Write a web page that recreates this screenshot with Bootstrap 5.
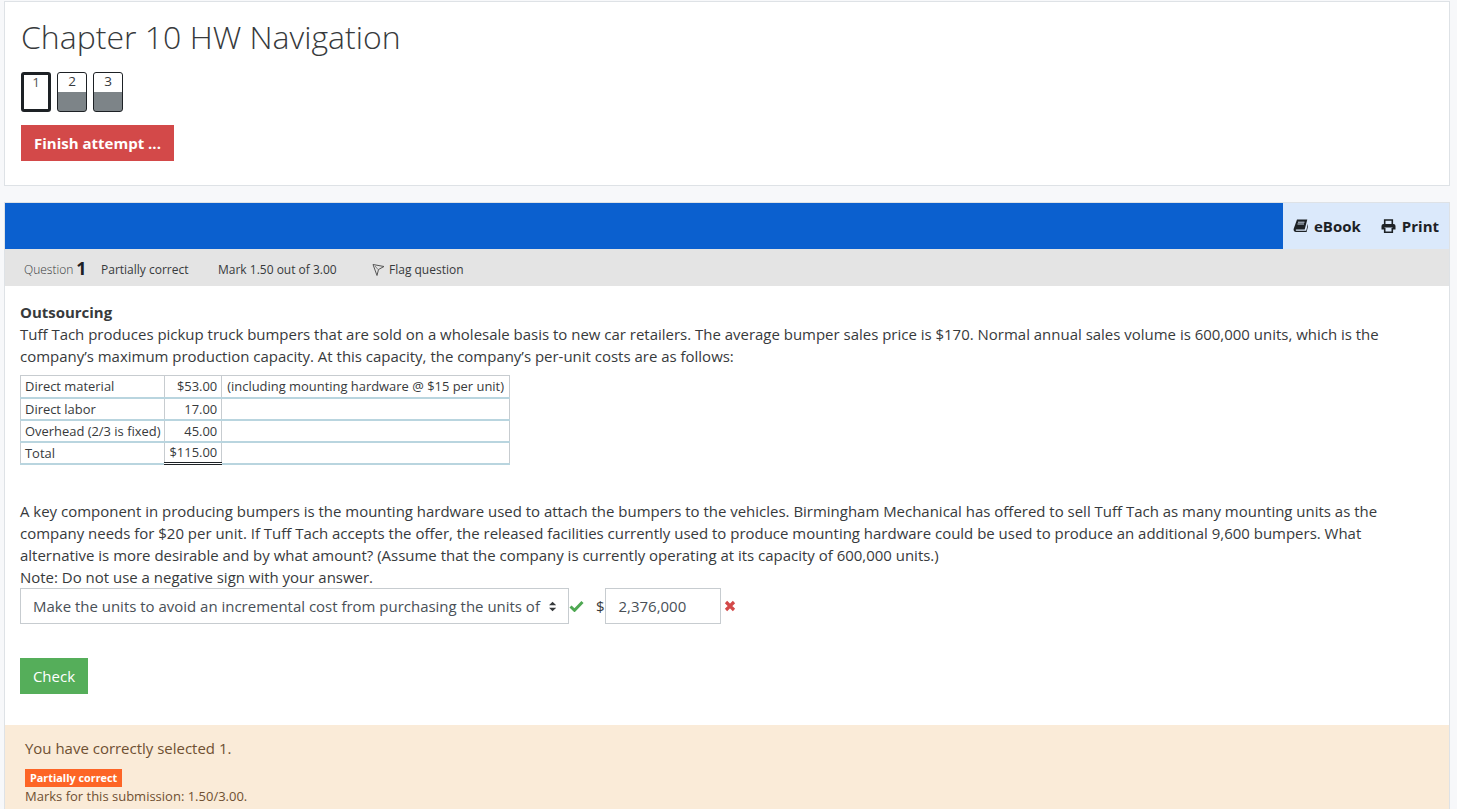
<!DOCTYPE html>
<html lang="en"><head><meta charset="utf-8"><title>Chapter 10 HW</title>
<link href="https://cdn.jsdelivr.net/npm/bootstrap@5.3.0/dist/css/bootstrap.min.css" rel="stylesheet">
<style>
html,body{height:809px;overflow:hidden}
body{background:#f7f8fa;font-family:"Open Sans",sans-serif;font-size:14.97px;line-height:22px;color:#373a3c;padding:1px 7px 0 4px}
.navpanel{background:#fff;border:1px solid #dee2e6;height:185px;padding:15px 16px 0;margin-bottom:16px}
.navtitle{font-family:"Open Sans",sans-serif;font-weight:300;font-size:32px;line-height:40px;color:#373a3c;margin:0 0 15px}
.qbtns{display:flex;gap:6px;margin-bottom:13px;height:40px}
.qbtn{width:30px;height:40px;border:1px solid #1d2125;border-radius:3px;font-size:13.5px;line-height:16px;text-align:center;background:linear-gradient(#fff 0,#fff 19px,#7d8488 19px);color:#373a3c}
.qbtn.cur{border-width:3px;background:#fff;line-height:14px;color:#555}
.finishbtn{background:#d34949;color:#fff;font-weight:700;font-size:15px;border:0;border-radius:0;height:36px;width:153px;padding:0;display:block;line-height:36px}
.qwrap{background:#fff;border:1px solid #dee2e6;border-bottom:0;height:607px;overflow:hidden}
.bluebar{background:#0b60cf;height:46px;display:flex;justify-content:flex-end}
.toolbox{background:#dbe9fb;width:166px;display:flex;align-items:center;gap:20px;padding:0 0 1px 10px;font-weight:700;color:#1d2125;font-size:15px}
.toolitem{display:flex;align-items:center;gap:6px}
.infobar{background:#e4e4e4;height:37px;display:flex;align-items:center;padding:4px 0 0 19px;font-size:12px;color:#373a3c}
.qlabel{color:#373a3c;font-weight:300;width:77px;display:flex;align-items:center;gap:3px}
.qnum{font-size:18px;font-weight:700;color:#1d2125;margin-top:-3px}
.qstate{width:117px}.qmark{width:154px}
.flagit{display:flex;align-items:center;gap:4px}
.qbody{padding:15px 15px 0}
.qtitle{font-weight:700;margin:0}
.qtext{margin:0}
.datatab{border-collapse:collapse;font-size:12.93px;line-height:18px;margin:8px 0 35px;color:#373a3c;border:1px solid #c7ccd0}
.datatab td{border:1px solid #c7ccd0;border-bottom:2px solid #b9d5df;padding:0 4px;height:22px}
.datatab .amt{text-align:right}
.datatab .notecell{padding:0 5px}
.datatab .totalamt{border-top:1px solid #1d2125;border-bottom:3px double #1d2125}
.answerline{display:flex;align-items:center;height:36px}
.fakeselect{width:549px;height:36px;border:1px solid #c7ccd0;display:flex;align-items:center;gap:9px;padding:0 12px;color:#495057;background:#fff;white-space:nowrap}
.dollar{margin-left:12px}
.amountbox{width:116px;height:36px;border:1px solid #c7ccd0;padding:0 13px;line-height:34px;color:#495057}
.checkbtn{background:#55ae5a;color:#fff;border:0;border-radius:0;width:68px;height:36px;padding:0;margin-top:34px;display:block;font-size:15px}
.feedback{background:#faebd8;color:#6f5032;margin-top:31px;padding:12px 20px 0;height:100px}
.fbtext{margin:0 0 10px}
.pbadge{display:block;width:fit-content;background:#fd6526;color:#fff;font-weight:700;font-size:10.85px;line-height:18px;padding:0 5px;height:18px}
.marksline{font-size:13px;line-height:18px}
.xmark{margin-left:3px}
</style></head><body>
<section class="navpanel">
<h2 class="navtitle">Chapter 10 HW Navigation</h2>
<div class="qbtns"><div class="qbtn cur">1</div><div class="qbtn">2</div><div class="qbtn">3</div></div>
<button class="btn finishbtn">Finish attempt ...</button>
</section>
<section class="qwrap">
<div class="bluebar"><div class="toolbox">
<span class="toolitem"><svg width="15" height="14" viewBox="0 0 15 14"><path d="M4 .5h10.300l-2.600 10H3.400c-.9 0-1.200 1-.1 1.200h9.900l1.600-6.500.7.4-1.900 7.400H3C1 13 .3 11.300.7 9.800z" fill="#1d2125"/><path d="M5 3.200h6.500M4.500 5h6.500" stroke="#dbe9fb" stroke-width=".9"/></svg>eBook</span>
<span class="toolitem"><svg width="15" height="14" viewBox="0 0 15 14"><path d="M3.700 6V1h7.600v5" fill="none" stroke="#1d2125" stroke-width="1.600"/><path d="M2.500 5h10Q14.500 5 14.500 7v3.500h-3V8.500h-8v2h-3V7Q.5 5 2.500 5z" fill="#1d2125"/><path d="M3.700 9v4.200h7.600V9" fill="none" stroke="#1d2125" stroke-width="1.600"/></svg>Print</span>
</div></div>
<div class="infobar">
<span class="qlabel">Question <span class="qnum">1</span></span>
<span class="qstate">Partially correct</span><span class="qmark">Mark 1.50 out of 3.00</span>
<span class="flagit"><svg width="13" height="13" viewBox="0 0 13 13"><path d="M1 1.500 12 3.500 6.500 6.500 5 12.500z" fill="none" stroke="#555" stroke-width="1"/><path d="M3 3 6 6.500" stroke="#555" stroke-width=".7"/></svg>Flag question</span>
</div>
<div class="qbody">
<p class="qtitle">Outsourcing</p>
<p class="qtext">Tuff Tach produces pickup truck bumpers that are sold on a wholesale basis to new car retailers. The average bumper sales price is $170. Normal annual sales volume is 600,000 units, which is the company’s maximum production capacity. At this capacity, the company’s per-unit costs are as follows:</p>
<table class="datatab">
<tr><td>Direct material</td><td class="amt">$53.00</td><td class="notecell">(including mounting hardware @ $15 per unit)</td></tr>
<tr><td>Direct labor</td><td class="amt">17.00</td><td></td></tr>
<tr><td>Overhead (2/3 is fixed)</td><td class="amt">45.00</td><td></td></tr>
<tr><td>Total</td><td class="amt totalamt">$115.00</td><td></td></tr>
</table>
<p class="qtext">A key component in producing bumpers is the mounting hardware used to attach the bumpers to the vehicles. Birmingham Mechanical has offered to sell Tuff Tach as many mounting units as the company needs for $20 per unit. If Tuff Tach accepts the offer, the released facilities currently used to produce mounting hardware could be used to produce an additional 9,600 bumpers. What alternative is more desirable and by what amount? (Assume that the company is currently operating at its capacity of 600,000 units.)<br>Note: Do not use a negative sign with your answer.</p>
<div class="answerline">
<div class="fakeselect"><span>Make the units to avoid an incremental cost from purchasing the units of</span><svg width="8" height="11" viewBox="0 0 8 11"><path d="M4 0 8 4H0zM4 11 0 7H8z" fill="#373a3c"/></svg></div>
<svg width="15" height="12" viewBox="0 0 15 12"><path d="M1.500 6.500 5.500 10.300 13.500 2" fill="none" stroke="#4fa853" stroke-width="3"/></svg>
<span class="dollar">$</span>
<span class="amountbox">2,376,000</span>
<svg class="xmark" width="12" height="12" viewBox="0 0 12 12"><path d="M2 2 10 10M10 2 2 10" stroke="#d34949" stroke-width="3.200"/></svg>
</div>
<button class="btn checkbtn">Check</button>
</div>
<div class="feedback">
<p class="fbtext">You have correctly selected 1.</p>
<span class="pbadge">Partially correct</span>
<div class="marksline">Marks for this submission: 1.50/3.00.</div>
</div>
</section>
</body></html>
